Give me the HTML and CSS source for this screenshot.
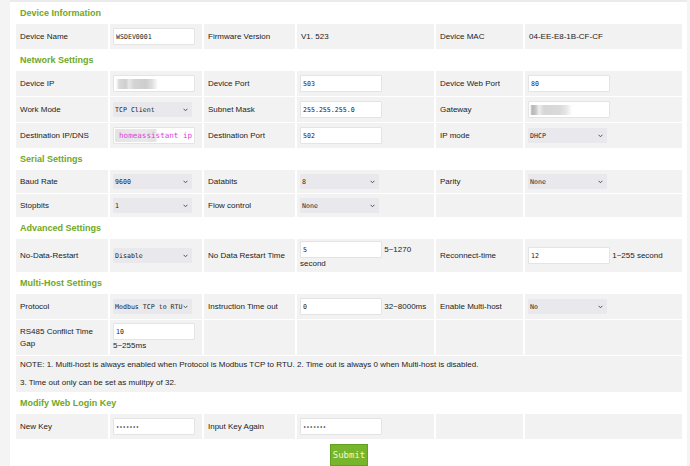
FILE: index.html
```html
<!DOCTYPE html>
<html lang="en">
<head>
  <meta charset="UTF-8">
  <meta name="viewport" content="width=device-width, initial-scale=1.0">
  <title>Device Settings</title>
  <link rel="stylesheet" href="styles.css">
</head>
<body>

  <div class="page">
    <form id="settingsForm">
      <table class="settings">
        <colgroup>
          <col class="c1"><col class="c2"><col class="c3"><col class="c4"><col class="c5"><col class="c6">
        </colgroup>

        <tr class="section"><td colspan="6">Device Information</td></tr>
        <tr>
          <td>Device Name</td>
          <td class="f"><input type="text" value="WSDEV0001"></td>
          <td>Firmware Version</td>
          <td>V1. 523</td>
          <td>Device MAC</td>
          <td>04-EE-E8-1B-CF-CF</td>
        </tr>

        <tr class="section"><td colspan="6">Network Settings</td></tr>
        <tr>
          <td>Device IP</td>
          <td class="f"><input type="text" class="masked" value=""></td>
          <td>Device Port</td>
          <td class="f"><input type="text" value="503"></td>
          <td>Device Web Port</td>
          <td class="f"><input type="text" value="80"></td>
        </tr>
        <tr>
          <td>Work Mode</td>
          <td class="f"><select><option>TCP Client</option></select></td>
          <td>Subnet Mask</td>
          <td class="f"><input type="text" value="255.255.255.0"></td>
          <td>Gateway</td>
          <td class="f"><input type="text" class="masked dark" value=""></td>
        </tr>
        <tr>
          <td>Destination IP/DNS</td>
          <td class="f"><input type="text" class="masked note-ip" value="homeassistant ip"></td>
          <td>Destination Port</td>
          <td class="f"><input type="text" value="502"></td>
          <td>IP mode</td>
          <td class="f"><select><option>DHCP</option></select></td>
        </tr>

        <tr class="section"><td colspan="6">Serial Settings</td></tr>
        <tr>
          <td>Baud Rate</td>
          <td class="f"><select><option>9600</option></select></td>
          <td>Databits</td>
          <td class="f"><select><option>8</option></select></td>
          <td>Parity</td>
          <td class="f"><select><option>None</option></select></td>
        </tr>
        <tr>
          <td>Stopbits</td>
          <td class="f"><select><option>1</option></select></td>
          <td>Flow control</td>
          <td class="f"><select><option>None</option></select></td>
          <td></td>
          <td></td>
        </tr>

        <tr class="section"><td colspan="6">Advanced Settings</td></tr>
        <tr class="tall">
          <td>No-Data-Restart</td>
          <td class="f"><select><option>Disable</option></select></td>
          <td>No Data Restart Time</td>
          <td class="f"><input type="text" value="5"> 5~1270 second</td>
          <td>Reconnect-time</td>
          <td class="f"><input type="text" value="12"> 1~255 second</td>
        </tr>

        <tr class="section"><td colspan="6">Multi-Host Settings</td></tr>
        <tr>
          <td>Protocol</td>
          <td class="f"><select><option>Modbus TCP to RTU</option></select></td>
          <td>Instruction Time out</td>
          <td class="f"><input type="text" value="0"> 32~8000ms</td>
          <td>Enable Multi-host</td>
          <td class="f"><select><option>No</option></select></td>
        </tr>
        <tr class="tall gap">
          <td>RS485 Conflict Time Gap</td>
          <td class="f"><input type="text" value="10"> 5~255ms</td>
          <td></td>
          <td></td>
          <td></td>
          <td></td>
        </tr>
        <tr class="note">
          <td colspan="6">
            NOTE: 1. Multi-host is always enabled when Protocol is Modbus TCP to RTU. 2. Time out is always 0 when Multi-host is disabled.<br>
            3. Time out only can be set as mulitpy of 32.
          </td>
        </tr>

        <tr class="section"><td colspan="6">Modify Web Login Key</td></tr>
        <tr>
          <td>New Key</td>
          <td class="f"><input type="password" value="1234567"></td>
          <td>Input Key Again</td>
          <td class="f"><input type="password" value="1234567"></td>
          <td></td>
          <td></td>
        </tr>
      </table>

      <div class="actions">
        <button type="button" id="submitBtn">Submit</button>
      </div>
    </form>
  </div>

</body>
</html>
```

FILE: styles.css
```css
body {
  margin: 0;
  background: #f4f4f4;
  font-family: "Liberation Sans", Arial, sans-serif;
  font-size: 8px;
  color: #222;
}
.page {
  margin-left: 10px;
  width: 670px;
  min-height: calc(100vh - 2px);
  padding: 0 3px 0 4px;
  background: #fff;
  border-top: 2px solid #ebebeb;
}
.settings {
  table-layout: fixed;
  width: 670px;
  border-spacing: 2px 1px;
}
.c1 { width: 92px; }
.c2 { width: 92px; }
.c3 { width: 91px; }
.c4 { width: 137px; }
.c5 { width: 87px; }
.c6 { width: 157px; }
td {
  background: #f2f2f2;
  padding: 4px;
  line-height: 12px;
  vertical-align: middle;
}
td.f {
  padding-left: 3px;
  padding-right: 3px;
}
.section td {
  background: none;
  color: #6ea826;
  font-size: 9px;
  font-weight: bold;
}
.tall td {
  padding-top: 2px;
  padding-bottom: 2px;
}
.tall.gap td {
  padding-top: 3px;
  padding-bottom: 3px;
}
.note td {
  padding: 0 4px;
  line-height: 18px;
}
input, select {
  box-sizing: border-box;
  margin: 0;
  font-family: "DejaVu Sans Mono", monospace;
  font-size: 6.6px;
  color: #222;
  vertical-align: middle;
}
input {
  width: 82px;
  height: 17px;
  padding: 0 2px;
  background: #fff;
  border: 1px solid #e4e4e4;
  border-radius: 1px;
  outline: none;
}
input[type="password"] {
  font-size: 5.5px;
}
select {
  width: 79px;
  height: 15px;
  padding: 0 2px;
  border: none;
  border-radius: 1px;
  appearance: none;
  -webkit-appearance: none;
  background: #e9e9ed url("data:image/svg+xml,%3Csvg xmlns='http://www.w3.org/2000/svg' width='5' height='4'%3E%3Cpath d='M.6.8 2.5 2.8 4.4.8' fill='none' stroke='%23555' stroke-width='1'/%3E%3C/svg%3E") no-repeat right 4px center;
}
.masked {
  background: #fff linear-gradient(90deg, #fff 0, #d9d9d9 3px, #cfcfcf 10px, #e8e8e8 13px, #d4d4d4 18px, #cdcdcd 30px, #dedede 36px, #fff 42px) no-repeat 2px center / 44px 10px;
}
.masked.dark {
  background: #fff linear-gradient(90deg, #fff 0, #b5b5b5 2px, #c8c8c8 6px, #eee 9px, #d6d6d6 14px, #dadada 30px, #e6e6e6 36px, #fff 42px) no-repeat 1px center / 44px 10px;
}
.masked.note-ip {
  padding: 0 0 0 5px;
  font-size: 7.6px;
  color: #e23fe2;
  background: #fff linear-gradient(90deg, #e4e4e4 0, #e9e9e9 30px, #e2e2e2 40px, #fff 43px) no-repeat 1px center / 44px 13px;
}
.actions {
  text-align: center;
  padding-top: 4px;
}
button {
  width: 38px;
  height: 22px;
  padding: 0;
  background-color: #77b52c;
  color: #eef7dc;
  border: 1px solid #62a01f;
  font-family: "DejaVu Sans Mono", monospace;
  font-size: 9px;
  cursor: pointer;
}
button:hover {
  background-color: #6ca825;
}
```
